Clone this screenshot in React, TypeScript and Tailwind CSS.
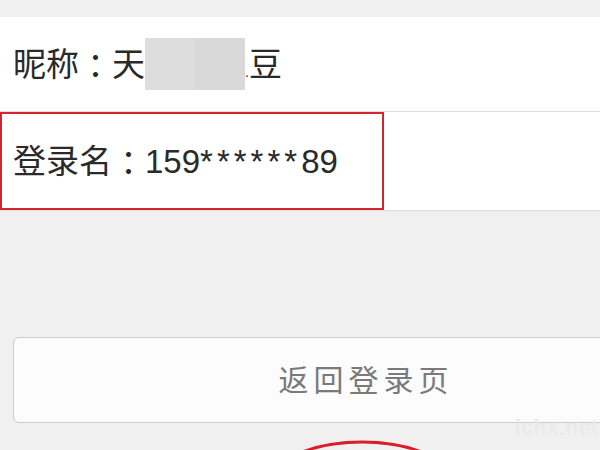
import React from 'react';

const App: React.FC = () => {
    // Shared font stack for latin digits + CJK labels
    const fontClass = "font-['Liberation_Sans','Noto_Sans_CJK_SC',sans-serif]";
    // Full-width colon drawn centred, as in the reference
    const colonClass = "font-['Noto_Sans_CJK_JP',sans-serif]";

    return (
        <div className={`relative w-[600px] h-[450px] overflow-hidden bg-[#f0f0f0] ${fontClass}`}>
            <div className="h-[17px]"></div>

            {/* Nickname row */}
            <div className="h-[94px] bg-white flex items-center pl-[13px] text-[33px] text-[#2a2a2a] leading-none">
                <span>昵称</span>
                <span className={colonClass}>：</span>
                <span>天</span>
                <span className="inline-block w-[50px] h-[52px] bg-[#dddddd]"></span>
                <span className="inline-block w-[50px] h-[52px] bg-[#d9d9d9]"></span>
                <span className="w-[4px] text-[14px] self-end mb-[32px]">.</span>
                <span>豆</span>
            </div>

            {/* Login name row with highlight box */}
            <div className="h-[100px] bg-white border-y border-[#dcdcdc] flex">
                <div className="w-[384px] h-full border-2 border-[#d3242f] flex items-center pl-[11px] text-[33px] text-[#2a2a2a] leading-none">
                    <span>登录名</span>
                    <span className={colonClass}>：</span>
                    <span>159</span>
                    <span className="tracking-[4px]">******</span>
                    <span>89</span>
                </div>
            </div>

            {/* Back to login button */}
            <div className="mt-[126px] pl-[13px]">
                <div className="w-[706px] h-[86px] rounded-[6px] border border-[#cdcdcd] bg-[#fcfcfc] flex items-center justify-center text-[30px] tracking-[5px] text-[#7a7a7a]">
                    返回登录页
                </div>
            </div>

            {/* Red annotation ellipse */}
            <svg className="absolute left-0 top-0" width="600" height="450">
                <ellipse cx="362" cy="482" rx="90" ry="40" fill="none" stroke="#d81e28" strokeWidth="3" />
            </svg>

            {/* Watermark */}
            <div className="absolute right-[2px] bottom-[6px] text-[22px] font-bold text-[#eaeaea]">ichx.net</div>
        </div>
    );
};

export default App;
